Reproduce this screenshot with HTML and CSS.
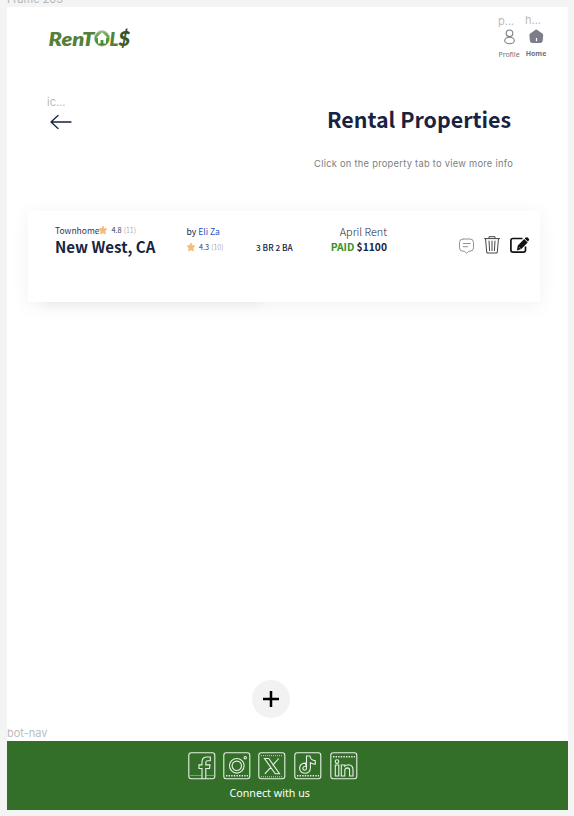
FILE: index.html
```html
<!DOCTYPE html>
<html lang="en">
<head>
<meta charset="utf-8">
<title>Rental Properties</title>
<link rel="stylesheet" href="styles.css">
</head>
<body>
<div class="frame-label">Frame 203</div>
<div class="frame">
  <header class="header">
    <svg class="logo" width="84" height="26" viewBox="0 0 84 26" role="img" aria-label="RenTOLS">
      <defs>
        <linearGradient id="dollar" x1="0" y1="0" x2="0" y2="1"><stop offset="0" stop-color="#2c4a24"/><stop offset="1" stop-color="#42652f"/></linearGradient>
        <linearGradient id="ring" x1="0" y1="0" x2="0" y2="1"><stop offset="0" stop-color="#8fb67c"/><stop offset=".5" stop-color="#5a9b3b"/><stop offset="1" stop-color="#3f8123"/></linearGradient>
      </defs>
      <text class="logo-text" x="0.600" y="18" textLength="46" lengthAdjust="spacingAndGlyphs">RenT</text>
      <text class="logo-text" x="61.500" y="18" textLength="9" lengthAdjust="spacingAndGlyphs">L</text>
      <text class="logo-text logo-dollar" x="70.500" y="17.500" textLength="11.500" lengthAdjust="spacingAndGlyphs">$</text>
      <circle cx="54" cy="10.400" r="7.800" fill="url(#ring)" stroke="#cbd9c3" stroke-width=".8"/>
      <path d="M54 4.200 59.600 9.800h-1.600v5.600h-2.600v-3.400h-2.800v3.400h-2.600V9.800h-1.600z" fill="#fff"/>
    </svg>
    <nav class="top-nav">
      <a class="nav-item">
        <span class="layer-label">p...</span>
        <svg width="14" height="16" viewBox="0 0 14 16" fill="none" stroke="#7b7e88" stroke-width="1.100"><circle cx="6.500" cy="4.300" r="3.300"/><ellipse cx="6.500" cy="11.500" rx="4.800" ry="3.200"/></svg>
        <span class="nav-text">Profile</span>
      </a>
      <a class="nav-item nav-home">
        <span class="layer-label">h...</span>
        <svg width="16" height="16" viewBox="0 0 16 16"><path d="M7.200.6Q8 .6 8.700 1.200L13.300 4.600Q14.300 5.300 14.200 6.600L13.700 11.700Q13.400 14 11.200 14H3.400Q1.200 14 .9 11.700L.4 6.600Q.3 5.300 1.300 4.600L5.900 1.200Q6.500.6 7.200.6Z" fill="#7b7e88"/><path d="M7.500 9v3.200" stroke="#fff" stroke-width="1.200"/></svg>
        <span class="nav-text">Home</span>
      </a>
    </nav>
  </header>

  <section class="heading">
    <div class="back">
      <span class="layer-label">ic...</span>
      <svg width="24" height="16" viewBox="0 0 24 16" fill="none" stroke="#19233f" stroke-width="1.300" stroke-linecap="round" stroke-linejoin="round"><path d="M22 8H2M9 1.500 2 8l7 6.500"/></svg>
    </div>
    <div class="titles">
      <h1>Rental Properties</h1>
      <p>Click on the property tab to view more info</p>
    </div>
  </section>

  <article class="card">
    <div class="place">
      <div class="rating-row"><span class="kind">Townhome</span><svg class="star" width="10" height="10" viewBox="0 0 10 10"><path d="m5 1 1.200 2.500 2.700.400-1.900 2L7.400 9 5 7.700 2.600 9 3 5.900l-1.900-2 2.700-.400z"/></svg><span class="score">4.8</span><span class="count">(11)</span></div>
      <h2>New West, CA</h2>
    </div>
    <div class="owner">
      <div class="by">by <a>Eli Za</a></div>
      <div class="rating-row"><svg class="star" width="10" height="10" viewBox="0 0 10 10"><path d="m5 1 1.200 2.500 2.700.400-1.900 2L7.400 9 5 7.700 2.600 9 3 5.900l-1.900-2 2.700-.400z"/></svg><span class="score">4.3</span><span class="count">(10)</span></div>
    </div>
    <div class="rooms">3 BR 2 BA</div>
    <div class="rent">
      <div class="month">April Rent</div>
      <div class="amount"><span>PAID</span> $1100</div>
    </div>
    <div class="actions">
      <svg width="16" height="17" viewBox="0 0 16 17" fill="none" stroke="#85868c" stroke-width=".9" stroke-linecap="round" stroke-linejoin="round"><path d="M4.500 1h6.500Q14.500 1 14.500 4.500v5.300q0 3.400-3.400 3.400H9.800L7.500 15.300 5.500 13.200H3.900Q.5 13.200.5 9.800V4.500Q.5 1 4 1ZM4.200 5.500h7M4.200 8.700h4.500"/></svg>
      <svg width="18" height="18" viewBox="0 0 18 18" fill="none" stroke="#333" stroke-width=".9"><path d="M.2 2.600h15.800M5 2.400V.7h6v1.700M1.500 2.700l1.300 14.300h10.400L14.500 2.700M5 4.700l.6 10.300M8 4.700v10.300M11 4.700l-.6 10.300"/></svg>
      <svg width="20" height="18" viewBox="0 0 20 18"><path d="M12.500 2.500H3Q.9 2.500.9 4.600v9.500q0 2.100 2.100 2.100h10.400q2.100 0 2.100-2.100V10.500" fill="none" stroke="#111" stroke-width="1.700"/><path d="m7.800 9.600 6.400-6.500 3.500 3.500-6.400 6.500-4.400 1.300zM14.700 2.600l1-1q1.100-.9 2 0l1.100 1.100q.9 1 0 1.900l-1 1z" fill="#111"/><path d="m9.300 11.400 1 1" stroke="#fff" stroke-width=".8"/></svg>
    </div>
  </article>

  <button class="add" aria-label="Add property"><svg width="18" height="18" viewBox="0 0 18 18"><path d="M9 1v16M1 9h16" stroke="#000" stroke-width="2.500"/></svg></button>
  <div class="layer-label footer-label">bot-nav</div>

  <footer class="footer">
    <div class="social">
      <svg viewBox="0 0 28 28"><rect x=".8" y=".8" width="26" height="26" rx="2.500"/><path d="M14 27V16.500h-3v-3.600h3V10q0-5 5-5h3.300v3.700h-2.500q-2 0-2 1.800v2.400h4.200l-.5 3.600h-3.700v10.500"/><path class="dots" d="M2.500 23.500h11M18.500 23.500h7"/></svg>
      <svg viewBox="0 0 28 28"><rect x=".8" y=".8" width="26" height="26" rx="2.500"/><circle cx="13.800" cy="13.800" r="7.300"/><circle cx="13.800" cy="13.800" r="4.700"/><circle cx="22.200" cy="5.700" r="1.200"/><path class="dots thick" d="M3 23.800h22"/></svg>
      <svg viewBox="0 0 28 28"><rect x=".8" y=".8" width="26" height="26" rx="2.500"/><path d="M6.500 6.500h4.300l10.700 15.300h-4.300ZM20.800 6.500l-6.200 6.800M12.800 15.300l-6 6.500"/><path class="dots" d="M3 3.700h22M3 24.800h22"/></svg>
      <svg viewBox="0 0 28 28"><rect x=".8" y=".8" width="26" height="26" rx="2.500"/><path d="M12.500 4h3.500q.4 4.200 5.300 4.700v3.400q-2.800 0-4.900-1.400v5.300q-.3 5.300-5.600 5.300-5.200-.4-5.200-5.200.3-5 6.200-5v3.400q-2.800-.2-3 1.800.1 2 2.200 2 1.500-.1 1.500-2.400Z"/><path class="dots thick" d="M3 23.800h22"/></svg>
      <svg viewBox="0 0 28 28"><rect x=".8" y=".8" width="26" height="26" rx="2.500"/><circle cx="7" cy="9.600" r="1.800"/><path d="M5.300 13h3.500v11H5.300ZM11.300 13h3.400v1.200q1.500-1.500 3.700-1.500 4.600.2 4.600 5.200V24h-3.400v-5.600q0-2.500-2.200-2.500-2.600.1-2.600 2.800V24h-3.500Z"/><path class="dots thick" d="M3 4.800h22"/></svg>
    </div>
    <div class="connect">Connect with us</div>
  </footer>
</div>
</body>
</html>
```
FILE: styles.css
```css
* { box-sizing: border-box; }
body {
  margin: 0;
  width: 574px;
  height: 816px;
  overflow: hidden;
  background: #f4f4f4;
  font-family: "Noto Sans", sans-serif;
  color: #19233f;
}
h1, h2, p { margin: 0; }
svg { display: block; flex: none; }
.frame-label {
  display: flex;
  align-items: flex-end;
  height: 7px;
  padding-left: 7px;
  font: 11px/15px Inter, sans-serif;
  color: #b5b5b5;
}
.frame {
  display: flex;
  flex-direction: column;
  width: 561px;
  height: 803px;
  margin-left: 7px;
  background: #fff;
}
.layer-label {
  font: 11px/14px Inter, sans-serif;
  color: #bcbcbc;
}
.header {
  display: flex;
  justify-content: space-between;
  height: 88px;
  padding: 7px 20px 0 41px;
}
.logo { overflow: visible; margin-top: 13.500px; }
.logo-text {
  font: italic 800 19.500px Lato, sans-serif;
  fill: #568038;
}
.logo-dollar { font-size: 21px; fill: url(#dollar); }
.top-nav { display: flex; gap: 4px; }
.nav-item {
  display: flex;
  flex-direction: column;
  align-items: center;
  width: 23px;
}
.nav-item .layer-label { align-self: flex-start; margin: 0 0 1px; }
.nav-home .layer-label { margin: -1px 0 2px; }
.nav-text { margin: 5px 0 0 -1px; font-size: 7px; line-height: 10px; color: #6f727c; }
.nav-home .nav-text { margin-top: 4px; font-weight: 700; }
.heading {
  display: flex;
  justify-content: space-between;
  height: 116px;
  padding: 0 55px 0 40px;
}
.back { display: flex; flex-direction: column; }
.back svg { margin: 5px 0 0 2px; }
.titles { text-align: right; padding-top: 9px; }
h1 {
  margin-right: 2px;
  font: 700 21.400px/30px "Noto Sans CJK SC", sans-serif;
}
.titles p {
  margin-top: 22px;
  font: 9.300px/16px Inter, sans-serif;
  letter-spacing: .27px;
  color: #7b817f;
}
.card {
  position: relative;
  z-index: 0;
  display: flex;
  width: 512px;
  height: 91px;
  margin-left: 21px;
  padding-top: 12px;
  border-radius: 2px;
  background: #fff;
  box-shadow: 0 3px 20px rgba(0, 0, 0, .06);
  font-family: "Noto Sans CJK SC", sans-serif;
}
.card::before {
  content: "";
  position: absolute;
  z-index: -2;
  left: 14px;
  bottom: 0;
  width: 220px;
  height: 40px;
  box-shadow: 0 3px 12px rgba(0, 0, 0, .05);
}
.card::after {
  content: "";
  position: absolute;
  z-index: -1;
  inset: 0;
  border-radius: 2px;
  background: #fff;
}
.place { width: 131px; margin-left: 27px; }
.rating-row { display: flex; align-items: center; height: 14px; font-size: 7.300px; line-height: 14px; }
.star { fill: #f5bd79; stroke: #f5bd79; stroke-width: .8; stroke-linejoin: round; margin-left: -1px; }
.score { margin-left: 3px; color: #36394a; }
.count { margin-left: 2px; color: #858585; font-weight: 300; }
.kind { font-size: 8.500px; color: #323b53; }
h2 { font-size: 15.100px; line-height: 21px; margin-top: -1px; white-space: nowrap; }
.owner { width: 70px; }
.by { font-size: 8.600px; line-height: 14px; margin: 1px 0 0 .500px; }
.by a { color: #2855c5; }
.owner .rating-row { margin: 2px 0 0 1px; }
.rooms { width: 64px; padding-top: 17px; font-size: 8.300px; line-height: 14px; font-weight: 500; white-space: nowrap; }
.rent { width: 67px; text-align: right; white-space: nowrap; }
.month { font-size: 10.800px; line-height: 16px; font-weight: 300; }
.amount { font-size: 10.300px; line-height: 16px; font-weight: 700; }
.amount span { color: #379426; }
.actions { display: flex; align-items: flex-start; margin-left: 72px; padding-top: 13px; }
.actions svg:nth-child(1) { margin-top: 2px; }
.actions svg:nth-child(2) { margin-left: 9px; }
.actions svg:nth-child(3) { margin-left: 8px; }
.add {
  display: flex;
  align-items: center;
  justify-content: center;
  width: 38px;
  height: 38px;
  margin: auto 0 8px 245px;
  padding: 0;
  border: 0;
  border-radius: 50%;
  background: #f2f2f2;
}
.footer-label { margin-bottom: 1px; }
.footer { flex: none; height: 69px; padding: 11px 0 0 181px; background: #336f29; }
.social { display: flex; gap: 7.200px; }
.social svg { width: 28px; height: 28px; fill: none; stroke: #e8f1e6; stroke-width: 1.100; }
.social svg:last-child { margin-left: 1px; }
.social .dots { stroke-dasharray: 1 1; stroke-width: .8; }
.social .thick { stroke-width: 1.600; stroke-dasharray: 1.400 1.200; }
.connect { margin: 4px 0 0 41.500px; font-size: 10.700px; line-height: 18px; color: #fff; }
```
